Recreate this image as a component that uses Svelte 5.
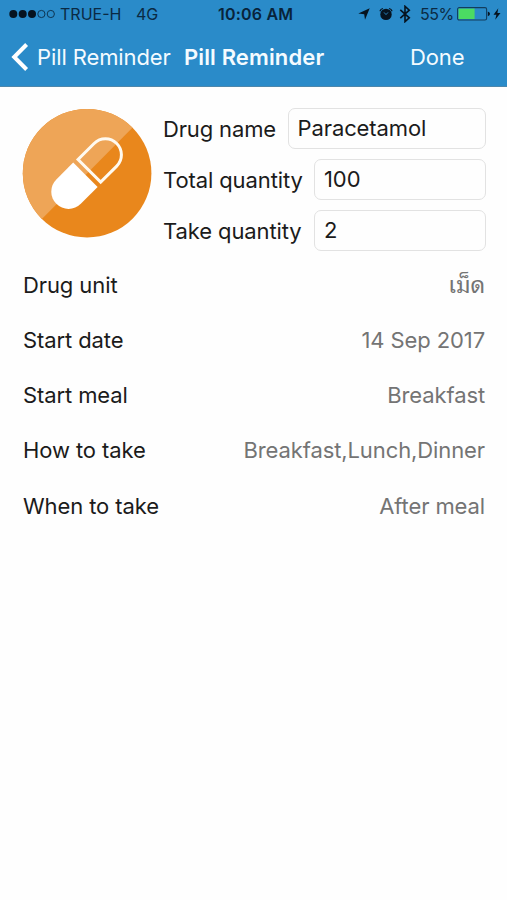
<script lang="ts">
  interface Row {
    label: string;
    value: string;
    thai?: boolean;
  }

  let drugName = 'Paracetamol';
  let totalQuantity = '100';
  let takeQuantity = '2';

  const rows: Row[] = [
    { label: 'Drug unit', value: 'เม็ด', thai: true },
    { label: 'Start date', value: '14 Sep 2017' },
    { label: 'Start meal', value: 'Breakfast' },
    { label: 'How to take', value: 'Breakfast,Lunch,Dinner' },
    { label: 'When to take', value: 'After meal' },
  ];
</script>

<div class="screen">
  <header>
    <div class="status">
      <div class="carrier">
        <svg width="47" height="10" viewBox="0 0 47 10">
          <g fill="#06131f">
            <circle cx="4.3" cy="5" r="4" />
            <circle cx="13.7" cy="5" r="4" />
            <circle cx="23" cy="5" r="4" />
          </g>
          <g fill="none" stroke="#0d3553" stroke-width="1">
            <circle cx="32.4" cy="5" r="3.6" />
            <circle cx="41.8" cy="5" r="3.6" />
          </g>
        </svg>
        <span class="operator">TRUE-H</span>
        <span class="network">4G</span>
      </div>
      <span class="time">10:06 AM</span>
      <div class="indicators">
        <svg class="location" width="12" height="12" viewBox="0 0 12 12">
          <path d="M11.7.3 7 11.7 6.2 6.2.3 5.4Z" fill="#06131f" />
        </svg>
        <svg class="alarm" width="14" height="14" viewBox="0 0 14 14">
          <circle cx="7" cy="7.4" r="5.7" fill="#06131f" />
          <path d="M.9 4.2Q1.6 2 4 1.5M13.1 4.2Q12.4 2 10 1.5" fill="none" stroke="#06131f" stroke-width="1.2" />
          <path d="M5 5.4 7 7.6 9 5.4" fill="none" stroke="#2a8bc9" stroke-width=".9" />
        </svg>
        <svg class="bluetooth" width="12" height="18" viewBox="0 0 12 18">
          <path d="M1.3 4.8 10.3 12.8 6 16.7V1.3L10.3 5.2 1.3 13.2" fill="none" stroke="#06131f" stroke-width="1.6" />
        </svg>
        <span class="percent">55%</span>
        <svg class="battery" width="34" height="14" viewBox="0 0 34 14">
          <rect x=".6" y=".6" width="29" height="12.4" rx="1.6" fill="none" stroke="#123d5d" stroke-width="1.1" />
          <rect x="1.6" y="1.6" width="16" height="10.4" fill="#4bdb63" />
          <path d="M30.8 4.4Q33 5 33 6.8T30.8 9.2Z" fill="#06131f" />
        </svg>
        <svg class="bolt" width="8" height="12" viewBox="0 0 8 12">
          <path d="M5.3.3.5 6.7H3.4L2.2 11.7 7.5 4.9H4.4Z" fill="#06131f" />
        </svg>
      </div>
    </div>
    <nav>
      <button class="back">
        <svg width="18" height="30" viewBox="0 0 18 30">
          <path d="M15.6 2.5 3.2 15 15.6 27.5" fill="none" stroke="#fff" stroke-width="4" />
        </svg>
        <span>Pill Reminder</span>
      </button>
      <h1>Pill Reminder</h1>
      <button class="done">Done</button>
    </nav>
  </header>

  <section class="drug">
    <svg class="pill" width="130" height="130" viewBox="0 0 130 130">
      <clipPath id="disc">
        <circle cx="65.1" cy="65.2" r="64.3" />
      </clipPath>
      <g clip-path="url(#disc)">
        <rect width="130" height="130" fill="#e9871c" />
        <path d="M0 0H130L0 131Z" fill="#eea557" />
      </g>
      <g transform="translate(63.4 66.8) rotate(45)">
        <path d="M-17.3 0H17.3V23.8A17.3 17.3 0 0 1-17.3 23.8Z" fill="#fff" />
        <path d="M-16-5.6H16V-28.3A16 16 0 0 0-16-28.3Z" fill="none" stroke="#fffaf0" stroke-width="3" />
      </g>
    </svg>
    <div class="fields">
      <label>
        <span class="name">Drug name</span>
        <input type="text" bind:value={drugName} />
      </label>
      <label>
        <span class="total">Total quantity</span>
        <input type="text" bind:value={totalQuantity} />
      </label>
      <label>
        <span class="take">Take quantity</span>
        <input type="text" bind:value={takeQuantity} />
      </label>
    </div>
  </section>

  <section class="rows">
    {#each rows as row (row.label)}
      <div class="row">
        <span>{row.label}</span>
        <span class="value" class:thai={row.thai}>{row.value}</span>
      </div>
    {/each}
  </section>
</div>

<style>
  :global(body) {
    background: #fefefe;
  }

  .screen {
    width: 507px;
    height: 900px;
    box-sizing: border-box;
    overflow: hidden;
    background: #fefefe;
    color: #1b1b1b;
    font-family: Inter, 'Liberation Sans', sans-serif;
    font-size: 22px;
    letter-spacing: -0.1px;
    white-space: nowrap;
  }

  header {
    height: 87px;
    box-sizing: border-box;
    background: #2a8bc9;
    border-bottom: 1px solid #4d87ab;
  }

  .status {
    display: grid;
    grid-template-columns: 218px 76px 1fr;
    align-items: center;
    height: 28px;
    color: #0a2a43;
    font-size: 16px;
    letter-spacing: 0;
  }

  .carrier,
  .indicators {
    display: flex;
    align-items: center;
  }

  .carrier {
    padding-left: 9px;
  }

  .operator {
    width: 75px;
    margin-left: 4px;
  }

  .network {
    margin-left: 1px;
  }

  .time {
    font-weight: 600;
    color: #08233a;
    letter-spacing: 0.2px;
  }

  .indicators {
    justify-content: flex-end;
    padding-right: 6px;
  }

  .alarm {
    margin-left: 9px;
  }

  .bluetooth {
    margin-left: 6px;
  }

  .percent {
    width: 33px;
    margin-left: 9px;
    letter-spacing: -0.5px;
  }

  .battery {
    margin-left: 4px;
  }

  .bolt {
    margin-left: 2px;
  }

  nav {
    display: flex;
    align-items: center;
    height: 58px;
    color: #f4fbff;
  }

  button {
    padding: 0;
    border: 0;
    background: none;
    color: inherit;
    font: inherit;
    letter-spacing: inherit;
  }

  .back {
    display: flex;
    align-items: center;
    gap: 8px;
    width: 173px;
    margin-left: 11px;
  }

  h1 {
    width: 226px;
    margin: 0;
    font-size: 22px;
    font-weight: 600;
    letter-spacing: 0.13px;
  }

  .drug {
    display: flex;
    padding: 21px 21px 0 22px;
  }

  .pill {
    flex-shrink: 0;
  }

  .fields {
    display: flex;
    flex: 1;
    flex-direction: column;
    gap: 10px;
    min-width: 0;
    margin-left: 11px;
  }

  label {
    display: flex;
    align-items: center;
    height: 41.2px;
  }

  .name {
    flex-shrink: 0;
    width: 124.5px;
    letter-spacing: -0.15px;
  }

  .total,
  .take {
    flex-shrink: 0;
    width: 151px;
  }

  input {
    flex: 1;
    min-width: 0;
    height: 41px;
    box-sizing: border-box;
    padding: 0 9px 2px;
    border: 1px solid #e2e2e2;
    border-radius: 7px;
    outline: none;
    background: #fefefe;
    color: inherit;
    font: inherit;
    letter-spacing: inherit;
  }

  .rows {
    padding: 0 22px 0 23px;
    margin-top: 5.4px;
  }

  .row {
    display: flex;
    align-items: center;
    justify-content: space-between;
    height: 55.3px;
  }

  .value {
    color: #747474;
  }

  .thai {
    padding-bottom: 4px;
    font-family: 'Noto Sans Thai Looped', Loma, Garuda, Waree, 'Noto Sans Thai', 'Noto Sans', sans-serif;
    font-size: 23px;
    line-height: 26px;
  }
</style>
